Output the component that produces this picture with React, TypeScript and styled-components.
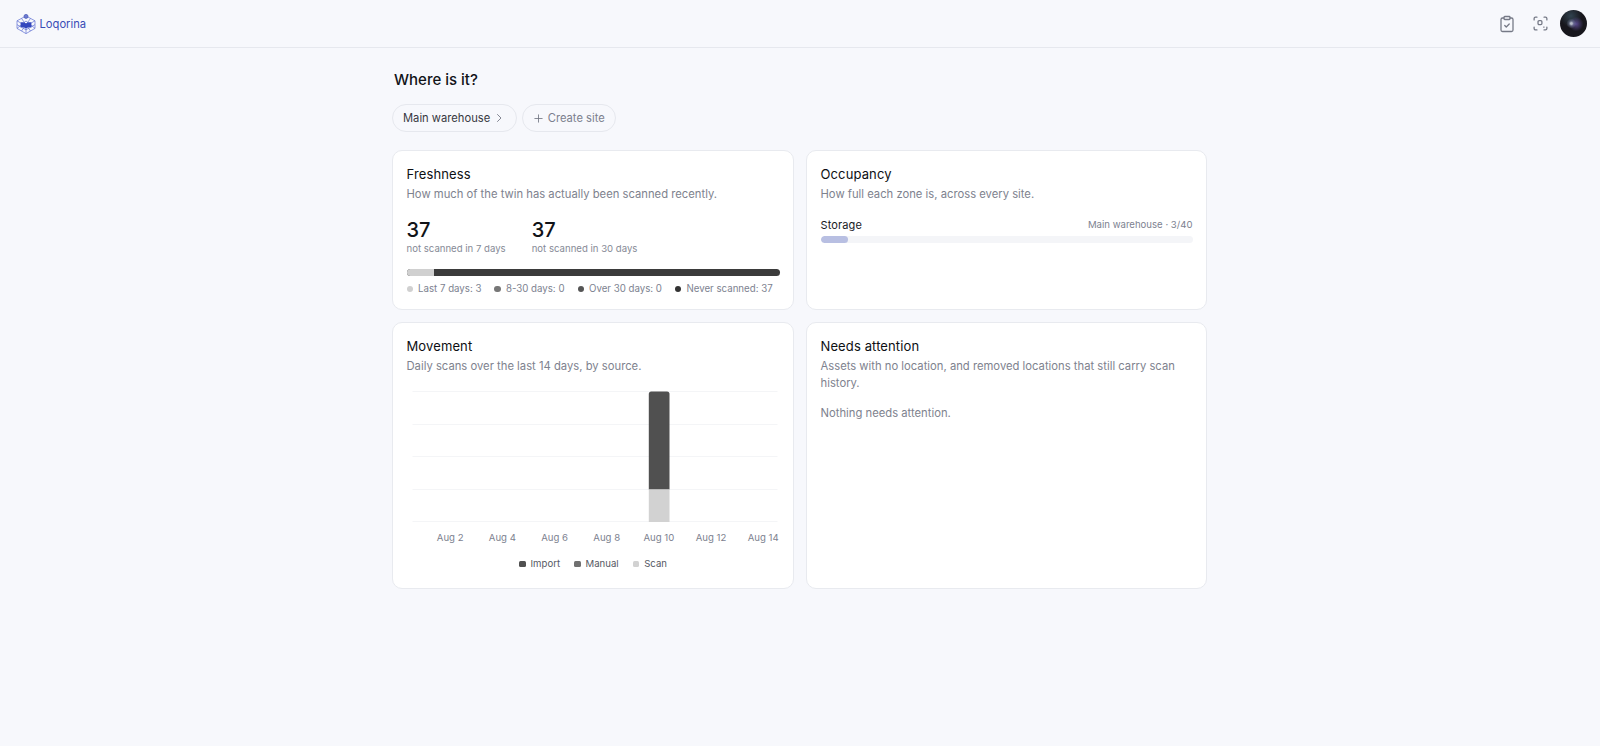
import React from "react";
import styled, { createGlobalStyle } from "styled-components";

const Global = createGlobalStyle`
  html, body { margin: 0; padding: 0; background: #f7f8fc; }
  body { font-family: Inter, "Liberation Sans", sans-serif; color: #111318; -webkit-font-smoothing: antialiased; }
  * { box-sizing: border-box; }
`;
const Page = styled.div`min-height: 746px; background: #f7f8fc;`;
const Header = styled.header`
  height: 48px; border-bottom: 1px solid #e6e8ee; padding: 0 13px 0 16px;
  display: flex; align-items: center; justify-content: space-between;
`;
const Brand = styled.div`display: flex; align-items: center; gap: 3.5px;`;
const BrandName = styled.span`font-size: 11.2px; font-weight: 400; color: #3a4cb6;`;
const HeaderActions = styled.div`display: flex; align-items: center; gap: 5.5px;`;
const IconButton = styled.button`
  width: 28px; height: 28px; padding: 0; border: 0; background: none; color: #757986;
  display: flex; align-items: center; justify-content: center;
`;
const Avatar = styled.div`
  width: 27px; height: 27px; border-radius: 50%;
  background:
    radial-gradient(circle at 42% 50%, rgba(225,232,240,.75) 0 4%, rgba(150,160,195,.4) 12%, transparent 24%),
    radial-gradient(circle at 60% 52%, rgba(110,90,175,.75) 0, transparent 34%),
    radial-gradient(circle at 40% 22%, rgba(60,85,100,.7) 0, transparent 42%),
    #17161c;
`;
const Main = styled.main`width: 815px; margin-left: 392px; padding-top: 22px;`;
const Heading = styled.h1`margin: 0 0 0 2px; font-size: 15px; line-height: 20px; font-weight: 500; color: #111318;`;
const Pills = styled.div`display: flex; gap: 4.5px; margin-top: 14px;`;
const Pill = styled.button<{ $muted?: boolean }>`
  height: 28px; border-radius: 14px; border: 1px solid #e6e8ee; background: transparent;
  padding: ${(p) => (p.$muted ? "0 10px" : "0 11px 0 10px")}; display: flex; align-items: center;
  gap: ${(p) => (p.$muted ? "4px" : "3px")}; font-family: inherit; font-size: 11.2px;
  color: ${(p) => (p.$muted ? "#7b808e" : "#373942")};
  svg { color: #6f7380; }
`;
const Grid = styled.div`
  display: grid; grid-template-columns: 1fr 1fr; grid-template-rows: 160px 267px; gap: 12px; margin-top: 18px;
`;
const Card = styled.section`
  background: #fff; border: 1px solid #e8eaef; border-radius: 10px; padding: 13.5px 13.5px 0;
`;
const CardTitle = styled.h2`margin: 0; font-size: 13px; line-height: 18px; font-weight: 400; letter-spacing: 0.12px; color: #0d0f13;`;
const CardText = styled.p`margin: 3.5px 0 0; font-size: 11.25px; line-height: 17px; color: #7e828e;`;
const Stats = styled.div`display: flex; gap: 26px; margin-top: 15px;`;
const Stat = styled.div`display: flex; flex-direction: column;`;
const StatValue = styled.span`font-size: 20px; line-height: 24px; font-weight: 500; color: #111318;`;
const StatLabel = styled.span`font-size: 9.6px; line-height: 14px; color: #868a96;`;
const Bar = styled.div`display: flex; height: 7px; border-radius: 3.5px; overflow: hidden; margin-top: 13px; background: #3b3b3b;`;
const BarFill = styled.div`height: 100%; background: #d0d0d0;`;
const FreshLegend = styled.div`display: flex; gap: 13px; margin-top: 6px; white-space: nowrap;`;
const LegendItem = styled.span`display: flex; align-items: center; gap: 5px; font-size: 9.7px; line-height: 14px; color: #7d8290;`;
const Dot = styled.i<{ $c: string }>`width: 6.5px; height: 6.5px; border-radius: 50%; background: ${(p) => p.$c};`;
const ZoneRow = styled.div`display: flex; justify-content: space-between; align-items: center; margin-top: 13.5px;`;
const ZoneName = styled.span`font-size: 11px; line-height: 16px; font-weight: 400; letter-spacing: 0.12px; color: #17191e;`;
const ZoneMeta = styled.span`font-size: 9.6px; line-height: 16px; color: #7d8290;`;
const Track = styled.div`height: 7px; border-radius: 3.5px; background: #f4f5f8; margin-top: 3.5px; overflow: hidden;`;
const TrackFill = styled.div`height: 100%; border-radius: 3.5px; background: #b8bfe2;`;
const ChartSvg = styled.svg`display: block; margin-top: 11px; width: 373px; height: 160px;`;
const ChartLegend = styled.div`display: flex; justify-content: center; gap: 14px; margin-top: 11px;`;
const Square = styled.i<{ $c: string }>`width: 6.5px; height: 6.5px; border-radius: 1.5px; background: ${(p) => p.$c};`;
const ChartLegendItem = styled.span`display: flex; align-items: center; gap: 5px; font-size: 9.6px; line-height: 14px; color: #555863;`;
const Empty = styled.p`margin: 13px 0 0; font-size: 11.25px; line-height: 17px; color: #7e828e;`;

const Logo = () => (
  <svg width="20" height="20" viewBox="0 0 20 20" fill="none" stroke="#5f70d2" strokeWidth="0.7">
    <path d="M10 2 19 6.8v7.6L10 19.6 1 14.4V6.8Z" />
    <path d="M1 6.8l9 5.2 9-5.2M10 12v7.6M1 10.6l9 5.2 9-5.2M5.5 4.4l9 12.6M14.5 4.4l-9 12.6M1 14.4 10 7l9 7.4" />
    <path d="M4.6 8.6c2-.6 3.9-.3 5.4.9 1.5-1.2 3.4-1.5 5.4-.9v5c-2-.5-3.9-.2-5.4 1-1.5-1.2-3.4-1.5-5.4-1Z" fill="#3346bd" stroke="none" />
    <circle cx="10" cy="2.4" r="2" fill="#6e7bd0" stroke="#3f51b5" />
  </svg>
);
const ClipboardCheck = () => (
  <svg width="18" height="18" viewBox="0 0 24 24" fill="none" stroke="currentColor" strokeWidth="1.7" strokeLinecap="round" strokeLinejoin="round">
    <rect x="8" y="2" width="8" height="4" rx="1" />
    <path d="M16 4h2a2 2 0 0 1 2 2v14a2 2 0 0 1-2 2H6a2 2 0 0 1-2-2V6a2 2 0 0 1 2-2h2" />
    <path d="m9 14 2 2 4-4" />
  </svg>
);
const ScanIcon = () => (
  <svg width="17" height="17" viewBox="0 0 24 24" fill="none" stroke="currentColor" strokeWidth="1.8" strokeLinecap="round" strokeLinejoin="round">
    <path d="M3 7V5a2 2 0 0 1 2-2h2M17 3h2a2 2 0 0 1 2 2v2M21 17v2a2 2 0 0 1-2 2h-2M7 21H5a2 2 0 0 1-2-2v-2" />
    <rect x="8.5" y="8" width="5.5" height="5.5" rx="1.5" />
    <path d="M16.5 17h.5" />
  </svg>
);
const Chevron = () => (
  <svg width="12" height="12" viewBox="0 0 24 24" fill="none" stroke="currentColor" strokeWidth="1.7" strokeLinecap="round" strokeLinejoin="round"><path d="m9 5 7 7-7 7" /></svg>
);
const Plus = () => (
  <svg width="11" height="11" viewBox="0 0 24 24" fill="none" stroke="currentColor" strokeWidth="1.8" strokeLinecap="round"><path d="M12 4v16M4 12h16" /></svg>
);

const ticks = ["Aug 2", "Aug 4", "Aug 6", "Aug 8", "Aug 10", "Aug 12", "Aug 14"];

const Chart = () => (
  <ChartSvg viewBox="0 0 373 160">
    {[5, 38, 70, 103, 135].map((y) => (
      <line key={y} x1="5.5" x2="370.5" y1={y + 0.5} y2={y + 0.5} stroke="#f4f5f7" />
    ))}
    <path d="M241.8 103.5V8a2.5 2.5 0 0 1 2.5-2.5h15.7a2.5 2.5 0 0 1 2.5 2.5v95.5Z" fill="#505050" />
    <rect x="241.8" y="103.5" width="20.7" height="32.5" fill="#d2d2d2" />
    {ticks.map((t, i) => (
      <text key={t} x={43.2 + i * 52.17} y="154.7" textAnchor="middle" fontSize="9.6" fontFamily="Inter, sans-serif" fill="#7d8290">{t}</text>
    ))}
  </ChartSvg>
);

export default function App() {
  return (
    <Page>
      <Global />
      <Header>
        <Brand><Logo /><BrandName>Loqorina</BrandName></Brand>
        <HeaderActions>
          <IconButton aria-label="Tasks"><ClipboardCheck /></IconButton>
          <IconButton aria-label="Scan"><ScanIcon /></IconButton>
          <Avatar />
        </HeaderActions>
      </Header>
      <Main>
        <Heading>Where is it?</Heading>
        <Pills>
          <Pill>Main warehouse <Chevron /></Pill>
          <Pill $muted><Plus /> Create site</Pill>
        </Pills>
        <Grid>
          <Card>
            <CardTitle>Freshness</CardTitle>
            <CardText>How much of the twin has actually been scanned recently.</CardText>
            <Stats>
              <Stat><StatValue>37</StatValue><StatLabel>not scanned in 7 days</StatLabel></Stat>
              <Stat><StatValue>37</StatValue><StatLabel>not scanned in 30 days</StatLabel></Stat>
            </Stats>
            <Bar><BarFill style={{ width: `${(3 / 40) * 100}%` }} /></Bar>
            <FreshLegend>
              <LegendItem><Dot $c="#d0d0d0" />Last 7 days: 3</LegendItem>
              <LegendItem><Dot $c="#777" />8-30 days: 0</LegendItem>
              <LegendItem><Dot $c="#555" />Over 30 days: 0</LegendItem>
              <LegendItem><Dot $c="#333" />Never scanned: 37</LegendItem>
            </FreshLegend>
          </Card>
          <Card>
            <CardTitle>Occupancy</CardTitle>
            <CardText>How full each zone is, across every site.</CardText>
            <ZoneRow><ZoneName>Storage</ZoneName><ZoneMeta>Main warehouse · 3/40</ZoneMeta></ZoneRow>
            <Track><TrackFill style={{ width: `${(3 / 40) * 100}%` }} /></Track>
          </Card>
          <Card>
            <CardTitle>Movement</CardTitle>
            <CardText>Daily scans over the last 14 days, by source.</CardText>
            <Chart />
            <ChartLegend>
              <ChartLegendItem><Square $c="#505050" />Import</ChartLegendItem>
              <ChartLegendItem><Square $c="#707070" />Manual</ChartLegendItem>
              <ChartLegendItem><Square $c="#d2d2d2" />Scan</ChartLegendItem>
            </ChartLegend>
          </Card>
          <Card>
            <CardTitle>Needs attention</CardTitle>
            <CardText>Assets with no location, and removed locations that still carry scan history.</CardText>
            <Empty>Nothing needs attention.</Empty>
          </Card>
        </Grid>
      </Main>
    </Page>
  );
}
